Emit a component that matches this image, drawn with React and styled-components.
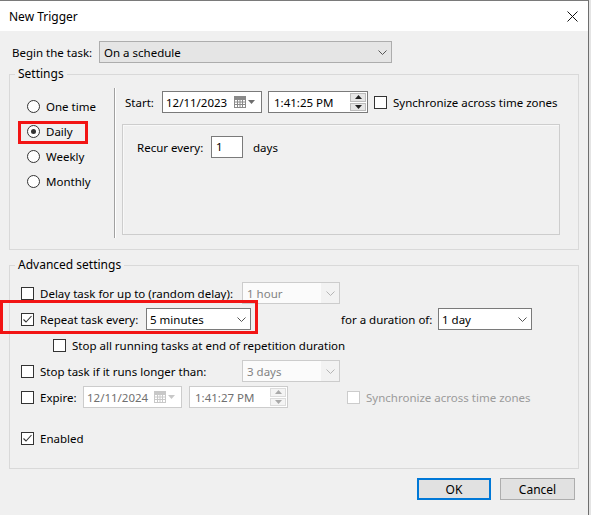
import React from "react";
import styled, { createGlobalStyle } from "styled-components";

const GlobalStyle = createGlobalStyle`
  html, body {
    margin: 0;
    padding: 0;
    background: #e4e4e4;
  }
  body {
    font-family: "Segoe UI", "Noto Sans", "Liberation Sans", sans-serif;
    font-size: 11.5px;
    color: #000;
  }
`;

const Window = styled.div`
  width: 589px;
  height: 515px;
  box-sizing: border-box;
  background: #f0f0f0;
  border-top: 1px solid #7a7a7a;
  border-right: 1px solid #6e6e6e;
  display: flex;
  flex-direction: column;
`;

const TitleBar = styled.div`
  height: 30px;
  background: #fff;
  display: flex;
  align-items: center;
  justify-content: space-between;
  padding: 0 10px 0 9px;
`;

const Title = styled.span`
  font-size: 12px;
`;

const Body = styled.div`
  padding-top: 10px;
  display: flex;
  flex-direction: column;
`;

const BeginRow = styled.div`
  display: flex;
  align-items: center;
  height: 22px;
  padding-left: 12px;
`;

const Text = styled.span`
  flex: none;
  width: ${(p) => (p.$w ? `${p.$w}px` : "auto")};
  margin-left: ${(p) => p.$ml || 0}px;
  color: ${(p) => (p.$disabled ? "#9b9b9b" : "#000")};
  white-space: nowrap;
`;

const comboBorder = { list: "#adadad", edit: "#7a7a7a", disabled: "#cccccc" };
const comboBg = { list: "#e5e5e5", edit: "#fff", disabled: "#fbfbfb" };

const Combo = styled.div`
  flex: none;
  width: ${(p) => p.$w}px;
  height: 22px;
  box-sizing: border-box;
  display: flex;
  align-items: center;
  border: 1px solid ${(p) => comboBorder[p.$variant]};
  background: ${(p) => comboBg[p.$variant]};
  color: ${(p) => (p.$variant === "disabled" ? "#838383" : "#000")};
`;

const ComboText = styled.span`
  flex: 1;
  padding-left: ${(p) => p.$pl || 4}px;
  white-space: nowrap;
`;

const ComboArrow = styled.span`
  width: 18px;
  height: 100%;
  display: flex;
  align-items: center;
  justify-content: center;
  background: ${(p) => (p.$disabled ? "#f2f2f2" : "transparent")};
`;

const Chevron = ({ color = "#555" }) => (
  <svg width="9" height="5" viewBox="0 0 9 5">
    <path d="M0.5 0.5 L4.5 4.5 L8.5 0.5" fill="none" stroke={color} strokeWidth="1" />
  </svg>
);

const Group = styled.fieldset`
  margin: ${(p) => p.$mt}px 9px 0;
  padding: 0;
  border: 1px solid #d9d9d9;
  min-width: 0;
`;

const Legend = styled.legend`
  margin-left: 5px;
  padding: 0 3px;
  line-height: 16px;
  font-size: 12px;
`;

const SettingsBody = styled.div`
  display: flex;
  height: 167px;
`;

const RadioColumn = styled.div`
  flex: none;
  width: 104px;
  box-sizing: border-box;
  padding: 12px 0 0 17px;
  display: flex;
  flex-direction: column;
`;

const RadioRow = styled.div`
  position: relative;
  height: 25px;
  display: flex;
  align-items: center;
`;

const RadioDot = styled.span`
  width: 13px;
  height: 13px;
  box-sizing: border-box;
  border: 1px solid #333;
  border-radius: 50%;
  background: #fff;
  margin-right: 6px;
  display: flex;
  align-items: center;
  justify-content: center;
  &::after {
    content: "";
    display: ${(p) => (p.$checked ? "block" : "none")};
    width: 5px;
    height: 5px;
    border-radius: 50%;
    background: #333;
  }
`;

const Highlight = styled.span`
  position: absolute;
  left: ${(p) => p.$x}px;
  top: ${(p) => p.$y}px;
  width: ${(p) => p.$w}px;
  height: ${(p) => p.$h}px;
  box-sizing: border-box;
  border: 3px solid #f21414;
  pointer-events: none;
`;

const Separator = styled.div`
  flex: none;
  width: 0;
  border-left: 1px solid #a0a0a0;
  border-right: 1px solid #fff;
  margin: 6px 0 11px;
`;

const RightColumn = styled.div`
  flex: none;
  width: 445px;
  padding: 9px 0 0 9px;
  display: flex;
  flex-direction: column;
  align-items: flex-start;
`;

const StartRow = styled.div`
  display: flex;
  align-items: center;
  height: 22px;
`;

const Field = styled.div`
  flex: none;
  width: ${(p) => p.$w}px;
  height: 22px;
  box-sizing: border-box;
  margin-right: ${(p) => p.$mr || 0}px;
  border: 1px solid ${(p) => (p.$disabled ? "#cccccc" : "#7a7a7a")};
  background: #fff;
  color: ${(p) => (p.$disabled ? "#6f6f6f" : "#000")};
  display: flex;
  align-items: center;
`;

const FieldText = styled.span`
  flex: 1;
  padding-left: ${(p) => p.$pl}px;
  white-space: nowrap;
`;

const CalendarIcon = ({ disabled }) => {
  const c = disabled ? "#c8c8c8" : "#8a8a8a";
  return (
    <svg width="22" height="12" viewBox="0 0 22 12" style={{ marginRight: 5 }}>
      <rect x="0.5" y="0.5" width="11" height="11" fill="#fff" stroke={c} />
      <path d="M0.5 3.5 H11.5 M0.5 6 H11.5 M0.5 8.5 H11.5 M3.5 3.5 V11.5 M6 3.5 V11.5 M8.5 3.5 V11.5" stroke={c} strokeWidth="1" />
      <rect x="0.5" y="0.5" width="11" height="3" fill={c} />
      <path d="M14 4 L21 4 L17.5 8 Z" fill={disabled ? "#c8c8c8" : "#6d6d6d"} />
    </svg>
  );
};

const Spinner = styled.div`
  width: 16px;
  height: 18px;
  margin-right: 1px;
  display: flex;
  flex-direction: column;
  gap: 1px;
`;

const SpinButton = styled.span`
  flex: 1;
  border: 1px solid ${(p) => (p.$disabled ? "#dcdcdc" : "#bcbcbc")};
  background: ${(p) => (p.$disabled ? "#f4f4f4" : "#e6e6e6")};
  display: flex;
  align-items: center;
  justify-content: center;
`;

const Tri = ({ up, disabled }) => (
  <svg width="7" height="4" viewBox="0 0 7 4">
    <path d={up ? "M0 4 L7 4 L3.5 0 Z" : "M0 0 L7 0 L3.5 4 Z"} fill={disabled ? "#a9a9a9" : "#222"} />
  </svg>
);

const TimeSpinner = ({ disabled }) => (
  <Spinner>
    <SpinButton $disabled={disabled}>
      <Tri up disabled={disabled} />
    </SpinButton>
    <SpinButton $disabled={disabled}>
      <Tri disabled={disabled} />
    </SpinButton>
  </Spinner>
);

const Box = styled.span`
  flex: none;
  width: 13px;
  height: 13px;
  box-sizing: border-box;
  border: 1px solid ${(p) => (p.$disabled ? "#cccccc" : "#333")};
  background: #fff;
  margin-right: 6px;
  display: flex;
`;

const Checkbox = ({ checked, disabled }) => (
  <Box $disabled={disabled}>
    {checked && (
      <svg width="11" height="11" viewBox="0 0 11 11">
        <path d="M1.5 5.5 L4 8 L9.5 2" fill="none" stroke="#333" strokeWidth="1.1" />
      </svg>
    )}
  </Box>
);

const RecurPanel = styled.div`
  width: 438px;
  margin: 11px 0 0 -3px;
  height: 111px;
  box-sizing: border-box;
  border: 1px solid #cdcdcd;
  box-shadow: inset 1px 1px 0 #f8f8f8;
  padding: 11px 0 0 14px;
`;

const RecurRow = styled.div`
  display: flex;
  align-items: center;
  height: 22px;
`;

const NumberInput = styled.div`
  width: 32px;
  height: 22px;
  box-sizing: border-box;
  border: 1px solid #7a7a7a;
  background: #fff;
  padding: 2px 0 0 4px;
`;

const AdvancedBody = styled.div`
  padding: 7px 0 17px 11px;
  display: flex;
  flex-direction: column;
`;

const OptionRow = styled.div`
  position: relative;
  height: 26px;
  display: flex;
  align-items: center;
  padding-left: ${(p) => p.$indent || 0}px;
  margin-top: ${(p) => p.$mt || 0}px;
`;

const ButtonBar = styled.div`
  display: flex;
  justify-content: flex-end;
  gap: 9px;
  margin-top: 9px;
  padding-right: 13px;
`;

const Button = styled.button`
  width: ${(p) => p.$w}px;
  height: 22px;
  box-sizing: border-box;
  background: #e1e1e1;
  border: ${(p) => (p.$primary ? "2px solid #0078d7" : "1px solid #adadad")};
  font-family: inherit;
  font-size: 12px;
  color: #000;
  padding: 0;
`;

const DisabledCombo = ({ w, value }) => (
  <Combo $w={w} $variant="disabled">
    <ComboText>{value}</ComboText>
    <ComboArrow $disabled>
      <Chevron color="#b5b5b5" />
    </ComboArrow>
  </Combo>
);

const EditCombo = ({ w, value }) => (
  <Combo $w={w} $variant="edit">
    <ComboText $pl={3}>{value}</ComboText>
    <ComboArrow>
      <Chevron />
    </ComboArrow>
  </Combo>
);

const schedules = [
  { label: "One time" },
  { label: "Daily", checked: true },
  { label: "Weekly" },
  { label: "Monthly" },
];

export default function App() {
  return (
    <>
      <GlobalStyle />
      <Window>
        <TitleBar>
          <Title>New Trigger</Title>
          <svg width="11" height="11" viewBox="0 0 11 11">
            <path d="M0.5 0.5 L10.5 10.5 M10.5 0.5 L0.5 10.5" stroke="#111" strokeWidth="1" />
          </svg>
        </TitleBar>
        <Body>
          <BeginRow>
            <Text $w={87}>Begin the task:</Text>
            <Combo $w={293} $variant="list">
              <ComboText>On a schedule</ComboText>
              <ComboArrow>
                <Chevron />
              </ComboArrow>
            </Combo>
          </BeginRow>

          <Group $mt={3}>
            <Legend>Settings</Legend>
            <SettingsBody>
              <RadioColumn>
                {schedules.map((s) => (
                  <RadioRow key={s.label}>
                    <RadioDot $checked={s.checked} />
                    <Text>{s.label}</Text>
                    {s.checked && <Highlight $x={-9} $y={2} $w={70} $h={23} />}
                  </RadioRow>
                ))}
              </RadioColumn>
              <Separator />
              <RightColumn>
                <StartRow>
                  <Text $w={37}>Start:</Text>
                  <Field $w={100} $mr={6}>
                    <FieldText $pl={3}>12/11/2023</FieldText>
                    <CalendarIcon />
                  </Field>
                  <Field $w={100} $mr={6}>
                    <FieldText $pl={5}>1:41:25 PM</FieldText>
                    <TimeSpinner />
                  </Field>
                  <Checkbox />
                  <Text>Synchronize across time zones</Text>
                </StartRow>
                <RecurPanel>
                  <RecurRow>
                    <Text $w={74}>Recur every:</Text>
                    <NumberInput>1</NumberInput>
                    <Text $ml={10}>days</Text>
                  </RecurRow>
                </RecurPanel>
              </RightColumn>
            </SettingsBody>
          </Group>

          <Group $mt={7}>
            <Legend>Advanced settings</Legend>
            <AdvancedBody>
              <OptionRow>
                <Checkbox />
                <Text $w={202}>Delay task for up to (random delay):</Text>
                <DisabledCombo w={98} value="1 hour" />
              </OptionRow>
              <OptionRow>
                <Checkbox checked />
                <Text $w={106}>Repeat task every:</Text>
                <EditCombo w={105} value="5 minutes" />
                <Text $w={97} $ml={90}>for a duration of:</Text>
                <EditCombo w={94} value="1 day" />
                <Highlight $x={-21} $y={-6} $w={258} $h={34} />
              </OptionRow>
              <OptionRow $indent={32}>
                <Checkbox />
                <Text>Stop all running tasks at end of repetition duration</Text>
              </OptionRow>
              <OptionRow>
                <Checkbox />
                <Text $w={202}>Stop task if it runs longer than:</Text>
                <DisabledCombo w={98} value="3 days" />
              </OptionRow>
              <OptionRow>
                <Checkbox />
                <Text $w={43}>Expire:</Text>
                <Field $w={99} $mr={7} $disabled>
                  <FieldText $pl={3}>12/11/2024</FieldText>
                  <CalendarIcon disabled />
                </Field>
                <Field $w={99} $mr={59} $disabled>
                  <FieldText $pl={5}>1:41:27 PM</FieldText>
                  <TimeSpinner disabled />
                </Field>
                <Checkbox disabled />
                <Text $disabled>Synchronize across time zones</Text>
              </OptionRow>
              <OptionRow $mt={15}>
                <Checkbox checked />
                <Text>Enabled</Text>
              </OptionRow>
            </AdvancedBody>
          </Group>

          <ButtonBar>
            <Button $w={74} $primary>
              OK
            </Button>
            <Button $w={75}>Cancel</Button>
          </ButtonBar>
        </Body>
      </Window>
    </>
  );
}
